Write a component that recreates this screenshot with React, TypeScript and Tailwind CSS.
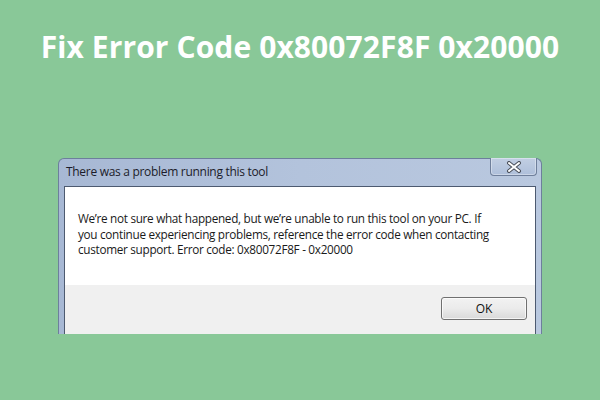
import React from "react";

const ui = { fontFamily: '"Open Sans", "Noto Sans", sans-serif' };

function CloseGlyph() {
  return (
    <svg width="16" height="12" viewBox="0 0 16 12">
      <path d="M3 2 L13 10 M13 2 L3 10" stroke="#4a4f5a" strokeWidth="4" strokeLinecap="round" />
      <path d="M3 2 L13 10 M13 2 L3 10" stroke="#ffffff" strokeWidth="2" strokeLinecap="round" />
    </svg>
  );
}

function ErrorDialog() {
  return (
    <div className="w-[484px] rounded-t-[6px] border-l border-r border-t border-[#6d7f9c] bg-gradient-to-r from-[#a7b8d4] via-[#b3c3dc] to-[#b9c8df] px-[5px] flex flex-col">
      {/* title bar */}
      <div className="h-[27px] flex items-start justify-between relative">
        <span className="text-[12px] text-[#1c1c2a] pl-[2px] pt-[5px] leading-[16px] tracking-[-0.3px]" style={ui}>
          There was a problem running this tool
        </span>
        <div className="w-[47px] h-[18px] mt-[-1px] mr-[-1px] rounded-b-[4px] border border-t-0 border-[#6f7f9b] bg-gradient-to-b from-[#c2cfe3] to-[#aebfda] flex items-center justify-center shadow-[inset_0_0_0_1px_rgba(255,255,255,0.35)]">
          <CloseGlyph />
        </div>
      </div>
      {/* client area */}
      <div className="border border-b-0 border-[#4d5a70] flex flex-col">
        <div className="bg-white h-[98px] pl-[13px] pt-[24px]">
          <p className="text-[11.75px] leading-[15.5px] text-[#1a1a1a] whitespace-nowrap tracking-[-0.3px]" style={ui}>
            We’re not sure what happened, but we’re unable to run this tool on your PC. If
            <br />
            you continue experiencing problems, reference the error code when contacting
            <br />
            customer support. Error code: 0x80072F8F - 0x20000
          </p>
        </div>
        <div className="bg-[#f0f0f0] h-[49px] flex items-start justify-end pt-[12px] pr-[8px]">
          <button
            className="w-[86px] h-[23px] rounded-[3px] border border-[#707070] bg-gradient-to-b from-[#f2f2f2] via-[#ebebeb] to-[#d9d9d9] text-[12px] text-[#111] flex items-center justify-center shadow-[inset_0_0_0_1px_rgba(255,255,255,0.7)]"
            style={ui}
          >
            OK
          </button>
        </div>
      </div>
    </div>
  );
}

export default function App() {
  return (
    <div className="w-[600px] h-[400px] bg-[#89c898] flex flex-col items-center overflow-hidden">
      <h1
        className="mt-[27px] text-[30px] font-bold text-white leading-[40px] tracking-[0.1px] whitespace-nowrap"
        style={ui}
      >
        Fix Error Code 0x80072F8F 0x20000
      </h1>
      <div className="mt-[91px]">
        <ErrorDialog />
      </div>
    </div>
  );
}
